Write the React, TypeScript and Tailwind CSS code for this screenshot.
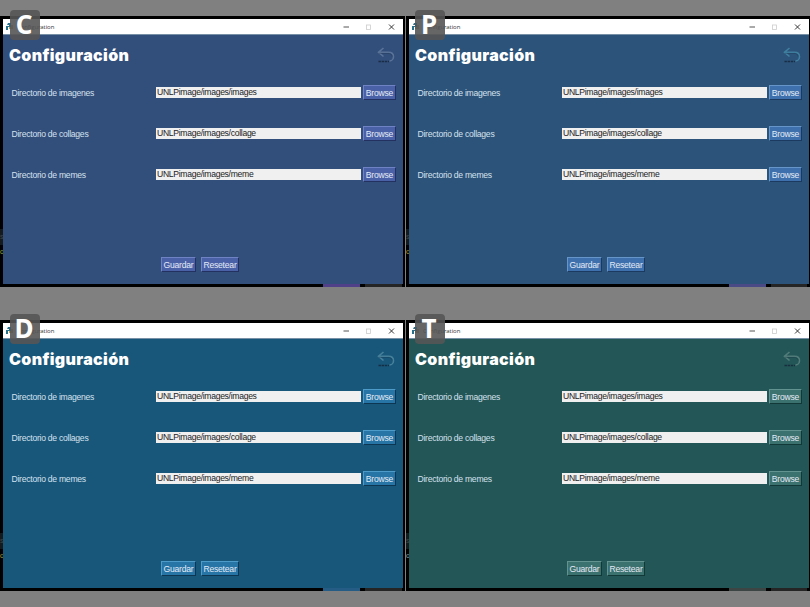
type Theme = {
  letter: string;
  bg: string;
  button: string;
  arrow: string;
  accent: string;
  speck: string;
  badge: string;
};

const themes: Theme[] = [
  { letter: "C", badge: "left-[10px]", bg: "bg-[#324e7b]", button: "bg-[#4a61a8] border-t-[#6f83c4] border-l-[#6f83c4] border-b-[#22315f] border-r-[#22315f]", arrow: "text-[#5a7399]", accent: "bg-[#50408a]", speck: "text-[#a8a830]" },
  { letter: "P", badge: "left-[9px]", bg: "bg-[#2c5379]", button: "bg-[#3d70ac] border-t-[#6595c9] border-l-[#6595c9] border-b-[#1c3a60] border-r-[#1c3a60]", arrow: "text-[#3f7f9f]", accent: "bg-[#4a4a86]", speck: "text-[#d09820]" },
  { letter: "D", badge: "left-[10px]", bg: "bg-[#18577a]", button: "bg-[#2675a6] border-t-[#4d9bc8] border-l-[#4d9bc8] border-b-[#0c3652] border-r-[#0c3652]", arrow: "text-[#47809a]", accent: "bg-[#245c86]", speck: "text-[#c09a30]" },
  { letter: "T", badge: "left-[9px]", bg: "bg-[#235656]", button: "bg-[#3b716e] border-t-[#639390] border-l-[#639390] border-b-[#123838] border-r-[#123838]", arrow: "text-[#527c7a]", accent: "bg-[#3c4444]", speck: "text-[#a0a0a0]" },
];

const rows = [
  { label: "Directorio de imagenes", path: "UNLPimage/images/images" },
  { label: "Directorio de collages", path: "UNLPimage/images/collage" },
  { label: "Directorio de memes", path: "UNLPimage/images/meme" },
];

function Button({ theme, className, children }: { theme: Theme; className: string; children: string }) {
  return (
    <button className={`flex h-[15px] shrink-0 items-center justify-center border pt-px whitespace-nowrap text-[8.6px] leading-none tracking-[-0.22px] text-[#e4eaf5] ${theme.button} ${className}`}>
      {children}
    </button>
  );
}

function BackArrow({ className }: { className: string }) {
  return (
    <svg className={className} width="18" height="18" viewBox="0 0 18 18" fill="none">
      <path d="M6.5 2 L1.5 6.2 L6.5 10.5 M2 6.2 H11.5 C15.5 6.2 16.5 8.7 16.5 10.7 C16.5 13.2 14.5 15 12.5 15" stroke="currentColor" strokeWidth="1.6" />
      <path d="M2 7.4 H11.5 C14 7.4 15.2 9.2 15.2 10.7" stroke="#172b42" strokeOpacity=".5" strokeWidth=".6" />
      <path d="M1.5 15.5 H12" stroke="#14243a" strokeOpacity=".8" strokeWidth="1.3" strokeDasharray="2.4 .7" />
    </svg>
  );
}

function ConfigWindow({ theme }: { theme: Theme }) {
  return (
    <section className="relative h-[271px] bg-black px-[3px] pt-[3px]">
      <div className={`h-[265px] w-[400px] ${theme.bg}`}>
        <header className="flex h-[16px] items-center border-b border-[#7790a5] bg-white text-[#333]">
          <svg className="ml-[3px] shrink-0" width="8" height="8" viewBox="0 0 8 8">
            <path d="M2 0 H5 V4 H2 V7 H0 V3 H3 V2 H1Z" fill="#28718c" />
            <path d="M5 2 H7 V6 H3 V4 H5Z" fill="#b9a75c" />
          </svg>
          <span className="ml-[3px] font-['Open_Sans'] text-[6px] leading-none tracking-[-0.08px]">Configuration</span>
          <svg className="ml-auto mr-[8px]" width="52" height="8" viewBox="0 0 52 8" fill="none">
            <path d="M0.5 4 H6" stroke="#555" />
            <rect x="23.5" y="2" width="4" height="4.5" stroke="#ccc" strokeWidth=".8" />
            <path d="M46 1.5 L51 6.5 M51 1.5 L46 6.5" stroke="#222" strokeWidth=".9" />
          </svg>
        </header>
        <div className="flex h-[50px] items-start justify-between pl-[6px] pr-[8px] pt-[11px]">
          <h1 className="font-['Inter'] text-[16px] leading-[18px] font-black tracking-[0.35px] text-white">Configuración</h1>
          <BackArrow className={theme.arrow} />
        </div>
        <div className="flex flex-col gap-[26px]">
          {rows.map((row) => (
            <div key={row.label} className="flex h-[15px] items-center pl-[8.5px]">
              <label className="w-[144.5px] pt-px text-[8.6px] leading-none tracking-[-0.26px] text-[#d5e1ee]">{row.label}</label>
              <div className="flex h-[11px] w-[205px] items-center bg-[#f0f0f0] pl-px text-[8.6px] leading-none tracking-[-0.3px] text-[#222]">{row.path}</div>
              <Button theme={theme} className="ml-[2px] w-[33px]">Browse</Button>
            </div>
          ))}
        </div>
        <div className="mt-[75px] flex gap-[5px] pl-[158px]">
          <Button theme={theme} className="w-[35px]">Guardar</Button>
          <Button theme={theme} className="w-[38px]">Resetear</Button>
        </div>
      </div>
      <div className="flex h-[3px] pl-[320px]">
        <i className={`w-[37px] ${theme.accent}`} />
        <i className="ml-[5px] flex-1 bg-[#252525]" />
      </div>
      <div className={`absolute top-[213px] left-0 h-[28px] w-[3px] overflow-hidden text-[7px] leading-[16px] ${theme.speck}`}>
        <div className="h-[16px] bg-[#151b1d] text-[#444]">s</div>
        <div className="leading-[14px]">o</div>
      </div>
      <div className={`absolute -top-[6px] flex h-[30px] w-[30px] items-center justify-center rounded-[4px] bg-[#555555]/90 pr-[2px] pb-[2px] font-['Noto_Sans'] text-[26px] leading-none font-bold text-white ${theme.badge}`}>
        <span>{theme.letter}</span>
      </div>
    </section>
  );
}

export default function App() {
  return (
    <main className="grid h-[607px] w-[810px] grid-cols-[405px_404px] content-start gap-x-px gap-y-[33px] overflow-hidden bg-[#808080] pt-[16px] font-['Liberation_Sans',sans-serif]">
      {themes.map((theme) => (
        <ConfigWindow key={theme.letter} theme={theme} />
      ))}
    </main>
  );
}
